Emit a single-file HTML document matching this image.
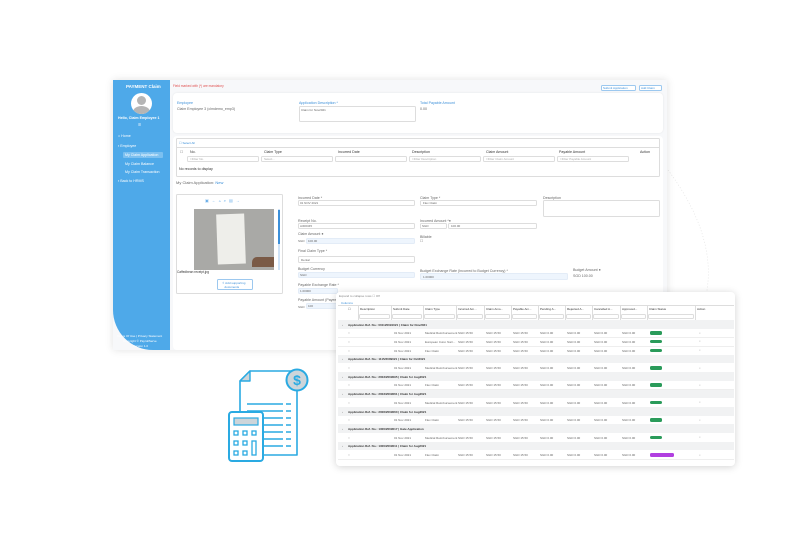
<!DOCTYPE html>
<html><head><meta charset="utf-8">
<style>
*{box-sizing:border-box;margin:0;padding:0}
body{width:800px;height:537px;background:#fff;position:relative;overflow:hidden;font-family:"Liberation Sans",sans-serif;color:#555}
.a{position:absolute}
.t{position:absolute;font-size:3.6px;white-space:nowrap;color:#666}
.in{position:absolute;border:0.5px solid #ddd;border-radius:1.5px;background:#fff}
.bl{background:#eef5fd;border-color:#e3ecf7}
.lab{color:#3b8fd9}
</style></head><body>
<svg class="a" style="left:0;top:0" width="800" height="537"><path d="M668 170 Q720 240 705 300" stroke="#ddd" stroke-width="0.6" fill="none" stroke-dasharray="1 2"/></svg>

<div class="a" style="left:113px;top:80px;width:554px;height:270px;background:#f7f8fa;box-shadow:0 0 8px rgba(0,0,0,.12)"></div>
<div class="a" style="left:113px;top:80px;width:57px;height:270px;background:#4ea9e9;border-bottom-left-radius:40px"></div>
<div class="t" style="left:126px;top:84px;color:#fff;font-size:4.5px;font-weight:bold">PAYMENT Claim</div>
<div class="a" style="left:131px;top:93px;width:21px;height:21px;border-radius:50%;background:#fff;overflow:hidden"><div class="a" style="left:6px;top:3px;width:9px;height:9px;border-radius:50%;background:#b5b5b5"></div><div class="a" style="left:2px;top:13px;width:17px;height:12px;border-radius:50%;background:#b5b5b5"></div></div>
<div class="t" style="left:118px;top:116px;color:#fff;font-weight:bold">Hello, Claim Employee 1</div>
<div class="t" style="left:138px;top:123px;color:#fff">☰</div>
<div class="t" style="left:118px;top:134px;color:#fff">⌂ Home</div>
<div class="t" style="left:118px;top:144px;color:#fff">▪ Employee</div>
<div class="a" style="left:123px;top:152px;width:40px;height:6px;background:#7cc0f0;border-radius:1px"></div>
<div class="t" style="left:125px;top:153px;color:#fff">My Claim Application</div>
<div class="t" style="left:125px;top:162px;color:#fff">My Claim Balance</div>
<div class="t" style="left:125px;top:170px;color:#fff">My Claim Transaction</div>
<div class="t" style="left:118px;top:179px;color:#fff">▪ Back to HRMS</div>
<div class="t" style="left:117px;top:334px;color:#fff;font-size:3px">Terms Of Use | Privacy Statement</div>
<div class="t" style="left:123px;top:339px;color:#fff;font-size:3px">Copyright © PayrollServe</div>
<div class="t" style="left:133px;top:344px;color:#fff;font-size:3px">Version 1.0</div>

<div class="t" style="left:173px;top:84px;color:#e05050;font-size:3.2px">Field marked with (*) are mandatory</div>
<div class="in" style="left:601px;top:85px;width:35px;height:6px;border-color:#9cc8ef"></div><div class="t" style="left:603px;top:86px;color:#3b8fd9;font-size:3px">Submit Application</div>
<div class="in" style="left:639px;top:85px;width:23px;height:6px;border-color:#9cc8ef"></div><div class="t" style="left:641px;top:86px;color:#3b8fd9;font-size:3px">Add Claim</div>

<div class="a" style="left:173px;top:93px;width:490px;height:40px;background:#fff;border-radius:4px;box-shadow:0 0 2px rgba(0,0,0,.08)"></div>
<div class="t lab" style="left:177px;top:101px">Employee</div>
<div class="t" style="left:177px;top:107px">Claim Employee 3 (clmdemo_emp3)</div>
<div class="t lab" style="left:299px;top:101px">Application Description *</div>
<div class="in" style="left:299px;top:106px;width:117px;height:16px"></div>
<div class="t" style="left:301px;top:108px;font-size:3px">Claim for Nov2021</div>
<div class="t lab" style="left:420px;top:101px">Total Payable Amount</div>
<div class="t" style="left:420px;top:107px">0.00</div>

<div class="a" style="left:173px;top:136px;width:490px;height:214px;background:#fff;border-radius:4px"></div>
<div class="in" style="left:176px;top:138px;width:484px;height:39px"></div>
<div class="t lab" style="left:179px;top:141px;font-size:3px">☐ Select All</div>
<div class="a" style="left:176px;top:147px;width:484px;height:0.5px;background:#ddd"></div>
<div class="t" style="left:180px;top:150px">☐</div>
<div class="t" style="left:190px;top:150px;color:#333">No.</div>
<div class="t" style="left:264px;top:150px;color:#333">Claim Type</div>
<div class="t" style="left:338px;top:150px;color:#333">Incurred Date</div>
<div class="t" style="left:412px;top:150px;color:#333">Description</div>
<div class="t" style="left:486px;top:150px;color:#333">Claim Amount</div>
<div class="t" style="left:559px;top:150px;color:#333">Payable Amount</div>
<div class="t" style="left:640px;top:150px;color:#333">Action</div>
<div class="in" style="left:187px;top:156px;width:72px;height:6px"></div><div class="t" style="left:190px;top:157px;color:#aaa;font-size:3px">=Filter No.</div>
<div class="in" style="left:261px;top:156px;width:72px;height:6px"></div><div class="t" style="left:264px;top:157px;color:#aaa;font-size:3px">Select...</div>
<div class="in" style="left:335px;top:156px;width:72px;height:6px"></div>
<div class="in" style="left:409px;top:156px;width:72px;height:6px"></div><div class="t" style="left:412px;top:157px;color:#aaa;font-size:3px">=Filter Description</div>
<div class="in" style="left:483px;top:156px;width:72px;height:6px"></div><div class="t" style="left:486px;top:157px;color:#aaa;font-size:3px">=Filter Claim Amount</div>
<div class="in" style="left:557px;top:156px;width:72px;height:6px"></div><div class="t" style="left:560px;top:157px;color:#aaa;font-size:3px">=Filter Payable Amount</div>
<div class="t" style="left:179px;top:167px;color:#333">No records to display</div>
<div class="t" style="left:176px;top:180px;font-size:4px">My Claim Application: <span style="color:#3b8fd9">New</span></div>

<div class="in" style="left:176px;top:194px;width:107px;height:100px"></div>
<div class="t" style="left:205px;top:198px;color:#6aaee8;font-size:4px;letter-spacing:3px">▣←▵⌕▤→</div>
<div class="a" style="left:194px;top:209px;width:80px;height:61px;background:#a9a9a6"></div>
<div class="a" style="left:217px;top:214px;width:28px;height:50px;background:#eeeeea;transform:rotate(-2deg)"></div>
<div class="a" style="left:252px;top:257px;width:22px;height:10px;background:#7a5a46;border-radius:5px 0 0 0"></div>
<div class="a" style="left:278px;top:209px;width:2px;height:61px;background:#cfe3f7"></div>
<div class="a" style="left:278px;top:210px;width:2px;height:34px;background:#3b8fd9"></div>
<div class="t" style="left:177px;top:270px;font-size:3.2px;color:#333">Caffedbean receipt.jpg</div>
<div class="in" style="left:217px;top:279px;width:36px;height:11px;border-color:#9cc8ef"></div>
<div class="t" style="left:222px;top:281px;color:#3b8fd9;font-size:3px">⇧ Add supporting<br>&nbsp;&nbsp;&nbsp;documents</div>

<div class="t" style="left:298px;top:196px">Incurred Date *</div>
<div class="in" style="left:298px;top:200px;width:117px;height:6px"></div><div class="t" style="left:300px;top:201px;font-size:3px">01 NOV 2021</div>
<div class="t" style="left:298px;top:219px">Receipt No.</div>
<div class="in" style="left:298px;top:223px;width:117px;height:6px"></div><div class="t" style="left:300px;top:224px;font-size:3px">A300345</div>
<div class="t" style="left:298px;top:232px">Claim Amount ●</div>
<div class="t" style="left:298px;top:239px;font-size:3px">SGD</div>
<div class="in bl" style="left:306px;top:238px;width:109px;height:6px"></div><div class="t" style="left:308px;top:239px;font-size:3px">100.00</div>
<div class="t" style="left:298px;top:249px">Final Claim Type *</div>
<div class="in" style="left:298px;top:256px;width:117px;height:7px"></div><div class="t" style="left:301px;top:258px;font-size:3px">Dental</div>
<div class="t" style="left:298px;top:267px">Budget Currency</div>
<div class="in bl" style="left:298px;top:272px;width:117px;height:6px"></div><div class="t" style="left:300px;top:273px;font-size:3px">SGD</div>
<div class="t" style="left:298px;top:283px">Payable Exchange Rate *</div>
<div class="in bl" style="left:298px;top:288px;width:40px;height:6px"></div><div class="t" style="left:300px;top:289px;font-size:3px">1.00000</div>
<div class="t" style="left:298px;top:298px">Payable Amount (Payee)</div>
<div class="t" style="left:298px;top:305px;font-size:3px">SGD</div>
<div class="in bl" style="left:306px;top:303px;width:32px;height:6px"></div><div class="t" style="left:308px;top:304px;font-size:3px">100</div>

<div class="t" style="left:420px;top:196px">Claim Type *</div>
<div class="in" style="left:420px;top:200px;width:117px;height:6px"></div><div class="t" style="left:423px;top:201px;font-size:3px">Flex Claim</div>
<div class="t" style="left:420px;top:219px">Incurred Amount *●</div>
<div class="in" style="left:420px;top:223px;width:27px;height:6px"></div><div class="t" style="left:422px;top:224px;font-size:3px">SGD</div>
<div class="in" style="left:448px;top:223px;width:89px;height:6px"></div><div class="t" style="left:451px;top:224px;font-size:3px">100.00</div>
<div class="t" style="left:420px;top:235px">Billable</div>
<div class="t" style="left:420px;top:239px">☐</div>
<div class="t" style="left:420px;top:269px">Budget Exchange Rate (Incurred to Budget Currency) *</div>
<div class="in bl" style="left:420px;top:273px;width:148px;height:7px"></div><div class="t" style="left:423px;top:275px;font-size:3px">1.00000</div>
<div class="t" style="left:543px;top:196px">Description</div>
<div class="in" style="left:543px;top:200px;width:117px;height:17px"></div>
<div class="t" style="left:573px;top:268px">Budget Amount ●</div>
<div class="t" style="left:573px;top:274px">SGD 100.00</div>

<div class="a" style="left:336px;top:292px;width:399px;height:174px;background:#fff;border-radius:4px;box-shadow:0 1px 8px rgba(0,0,0,.18)"></div>
<div class="t" style="left:339px;top:294px;font-size:3px;color:#888">Expand to collapse rows ☐ Off</div>
<div class="t" style="left:341px;top:301px;font-size:3px;color:#3b8fd9">Columns</div>
<div id="tb"></div>

<svg class="a" style="left:225px;top:362px" width="90" height="104" viewBox="0 0 90 104">
<path d="M15 19 L25 9 H72 V93 H15 Z" fill="#fff" stroke="#2aaae2" stroke-width="1.6" stroke-linejoin="round"/>
<path d="M15 19 H25 V9 Z" fill="#cdd5da" stroke="#2aaae2" stroke-width="1.4" stroke-linejoin="round"/>
<g stroke="#2aaae2" stroke-width="1.5">
<path d="M22 42H58M22 49H58M22 56H58M22 63H58M22 70H58M22 77H58M22 84H58"/>
<path d="M61 42h5M61 49h5M61 56h5M61 63h5M61 70h5M61 77h5M61 84h5"/>
</g>
<circle cx="72" cy="18" r="10.5" fill="#cdd5da" stroke="#2aaae2" stroke-width="2"/>
<text x="72" y="23" font-family="Liberation Sans" font-weight="bold" font-size="14" fill="#2aaae2" text-anchor="middle">$</text>
<rect x="4" y="50" width="34" height="49" rx="3" fill="#fff" stroke="#2aaae2" stroke-width="2"/>
<rect x="9" y="56" width="24" height="7" fill="#cdd5da" stroke="#2aaae2" stroke-width="1.2"/>
<g fill="none" stroke="#2aaae2" stroke-width="1.3">
<rect x="9" y="69" width="4" height="4"/><rect x="18" y="69" width="4" height="4"/><rect x="27" y="69" width="4" height="4"/>
<rect x="9" y="79" width="4" height="4"/><rect x="18" y="79" width="4" height="4"/><rect x="27" y="79" width="4" height="14"/>
<rect x="9" y="89" width="4" height="4"/><rect x="18" y="89" width="4" height="4"/>
</g>
</svg>

<script>
var tb=document.getElementById('tb'),h='';
var cols=[348,360,393,425,458,486,513,540,567,594,622,649,697];
var names=['☐','Description','Submit Date','Claim Type','Incurred Am...','Claim Amo...','Payable Am...','Pending A...','Rejected A...','Cancelled A...','Approved...','Claim Status','Action'];
for(var i=0;i<cols.length;i++){h+='<div class="t" style="left:'+cols[i]+'px;top:307px;font-size:3px;color:#333">'+names[i]+'</div>';if(i>0)h+='<div class="a" style="left:'+(cols[i]-2)+'px;top:305px;width:0.5px;height:16px;background:#ddd"></div>';}
h+='<div class="a" style="left:338px;top:305px;width:396px;height:0.5px;background:#ddd"></div>';
for(var i=1;i<12;i++){h+='<div class="in" style="left:'+(cols[i]-1)+'px;top:314px;width:'+(cols[i+1]-cols[i]-2)+'px;height:5px"></div>';}
var seq='GDDDGDGDGDGDGDGD',g=['Application Ref. No.: 001120091021 | Claim for Nov2021','Application Ref. No.: 1115/2009021 | Claim for Oct2021','Application Ref. No.: 2003/2009095 | Claim for Aug2021','Application Ref. No.: 2003/2009061 | Claim for Aug2021','Application Ref. No.: 2006/2009060 | Claim for Aug2021','Application Ref. No.: 1300/2009017 | Gate Application','Application Ref. No.: 1300/2009011 | Claim for Aug2021'],gi=0,y=320;
var types=['Vehicle Reimbursement','Medical Reimbursement','European Cuisi. Narr...','Flex Claim'];
for(var r=0;r<16;r++){
 if(seq[r]=='G'){h+='<div class="a" style="left:338px;top:'+y+'px;width:396px;height:8.7px;background:#f1f2f3"></div><div class="t" style="left:342px;top:'+(y+2.5)+'px;font-size:3px">›</div><div class="t" style="left:348px;top:'+(y+2.5)+'px;font-size:3px;color:#333;font-weight:bold">'+g[gi++]+'</div>';}
 else{var last=r==15;
 h+='<div class="a" style="left:338px;top:'+(y+8.4)+'px;width:396px;height:0.4px;background:#eee"></div>';
 h+='<div class="t" style="left:348px;top:'+(y+2.5)+'px;font-size:3px">○</div>';
 h+='<div class="t" style="left:394px;top:'+(y+2.5)+'px;font-size:3px">01 Nov 2021</div>';
 h+='<div class="t" style="left:425px;top:'+(y+2.5)+'px;font-size:3px">'+types[r%4]+'</div>';
 for(var c=4;c<11;c++)h+='<div class="t" style="left:'+cols[c]+'px;top:'+(y+2.5)+'px;font-size:3px">SGD '+(c<7?'15.50':'0.00')+'</div>';
 h+='<div class="a" style="left:650px;top:'+(y+2.5)+'px;width:'+(last?24:12)+'px;height:3.5px;border-radius:1.5px;background:'+(last?'#b13fe0':'#2a9b5a')+'"></div>';
 h+='<div class="t" style="left:699px;top:'+(y+2)+'px;font-size:3.5px;color:#aaa">⌕</div>';}
 y+=8.7;}
tb.innerHTML=h;
</script>
</body></html>
